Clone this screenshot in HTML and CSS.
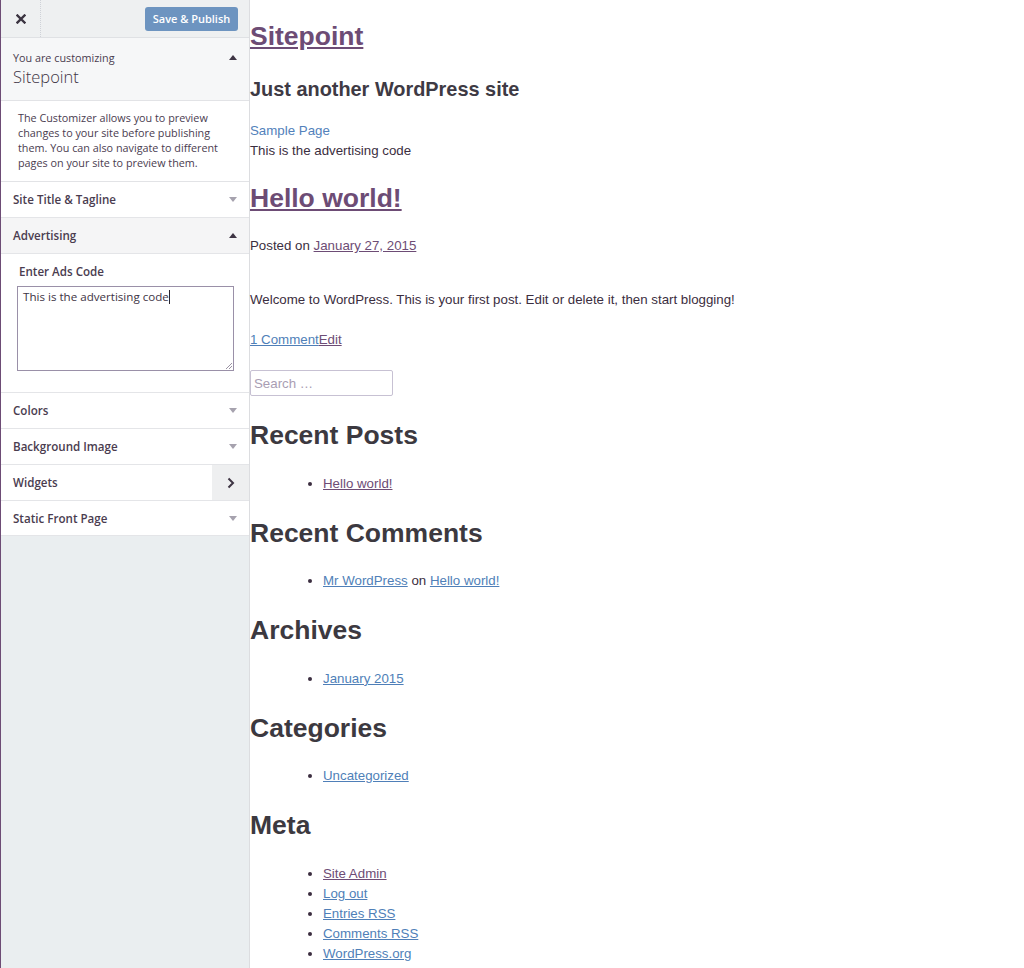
FILE: index.html
```html
<!DOCTYPE html>
<html lang="en">
<head>
<meta charset="utf-8">
<title>Customize: Sitepoint</title>
<link rel="stylesheet" href="styles.css">
</head>
<body>
<aside class="customizer">
  <header class="cz-header">
    <div class="cz-close">
      <svg width="10" height="10" viewBox="0 0 10 10"><path d="M1.5 1.5 L8.5 8.5 M8.5 1.5 L1.5 8.5" stroke="#3a3340" stroke-width="2.4" stroke-linecap="square"/></svg>
    </div>
    <button class="cz-save">Save &amp; Publish</button>
  </header>

  <section class="cz-info">
    <div class="cz-info-text">
      <span class="cz-info-small">You are customizing</span>
      <span class="cz-info-title">Sitepoint</span>
    </div>
    <svg class="arrow" width="8" height="5" viewBox="0 0 8 5"><polygon points="0,5 8,5 4,0" fill="#3e3544"/></svg>
  </section>

  <div class="cz-desc">The Customizer allows you to preview changes to your site before publishing them. You can also navigate to different pages on your site to preview them.</div>

  <div class="cz-row">
    <span>Site Title &amp; Tagline</span>
    <svg class="arrow" width="8" height="5" viewBox="0 0 8 5"><polygon points="0,0 8,0 4,5" fill="#a6a2ae"/></svg>
  </div>
  <div class="cz-row open">
    <span>Advertising</span>
    <svg class="arrow" width="8" height="5" viewBox="0 0 8 5"><polygon points="0,5 8,5 4,0" fill="#3e3544"/></svg>
  </div>
  <div class="cz-content">
    <label class="cz-label">Enter Ads Code</label>
    <div class="cz-textarea">This is the advertising code<span class="caret"></span>
      <svg class="grip" width="7" height="7" viewBox="0 0 7 7"><path d="M1 7 L7 1 M4 7 L7 4" stroke="#9b93a3" stroke-width="1"/></svg>
    </div>
  </div>
  <div class="cz-row">
    <span>Colors</span>
    <svg class="arrow" width="8" height="5" viewBox="0 0 8 5"><polygon points="0,0 8,0 4,5" fill="#a6a2ae"/></svg>
  </div>
  <div class="cz-row">
    <span>Background Image</span>
    <svg class="arrow" width="8" height="5" viewBox="0 0 8 5"><polygon points="0,0 8,0 4,5" fill="#a6a2ae"/></svg>
  </div>
  <div class="cz-row panel">
    <span>Widgets</span>
    <div class="cz-go">
      <svg width="8" height="12" viewBox="0 0 8 12"><path d="M1.5 1.5 L6 6 L1.5 10.5" fill="none" stroke="#3e3544" stroke-width="2"/></svg>
    </div>
  </div>
  <div class="cz-row last">
    <span>Static Front Page</span>
    <svg class="arrow" width="8" height="5" viewBox="0 0 8 5"><polygon points="0,0 8,0 4,5" fill="#a6a2ae"/></svg>
  </div>
</aside>

<main class="preview">
  <h1 class="site-title"><a href="#" class="visited">Sitepoint</a></h1>
  <h2 class="tagline">Just another WordPress site</h2>
  <div class="line nav"><a href="#" class="plain">Sample Page</a></div>
  <div class="line">This is the advertising code</div>

  <h1 class="entry-title"><a href="#" class="visited">Hello world!</a></h1>
  <div class="line posted">Posted on <a href="#" class="visited">January 27, 2015</a></div>
  <p class="line content">Welcome to WordPress. This is your first post. Edit or delete it, then start blogging!</p>
  <div class="line footer"><a href="#" class="blue">1 Comment</a><a href="#" class="visited">Edit</a></div>

  <div class="search"><span class="placeholder">Search …</span></div>

  <h2 class="widget-title">Recent Posts</h2>
  <ul class="widget-list">
    <li><a href="#" class="visited">Hello world!</a></li>
  </ul>
  <h2 class="widget-title">Recent Comments</h2>
  <ul class="widget-list">
    <li><a href="#" class="blue">Mr WordPress</a> on <a href="#" class="blue">Hello world!</a></li>
  </ul>
  <h2 class="widget-title">Archives</h2>
  <ul class="widget-list">
    <li><a href="#" class="blue">January 2015</a></li>
  </ul>
  <h2 class="widget-title">Categories</h2>
  <ul class="widget-list">
    <li><a href="#" class="blue">Uncategorized</a></li>
  </ul>
  <h2 class="widget-title">Meta</h2>
  <ul class="widget-list">
    <li><a href="#" class="visited">Site Admin</a></li>
    <li><a href="#" class="blue"><abbr>Log out</abbr></a></li>
    <li><a href="#" class="blue"><abbr>Entries RSS</abbr></a></li>
    <li><a href="#" class="blue"><abbr>Comments RSS</abbr></a></li>
    <li><a href="#" class="blue">WordPress.org</a></li>
  </ul>
</main>
</body>
</html>
```
FILE: styles.css
```css
html, body {
  margin: 0;
  padding: 0;
  height: 100%;
}
body {
  display: flex;
  align-items: stretch;
  background: #ffffff;
  overflow: hidden;
}

/* ---------- Customizer sidebar ---------- */
.customizer {
  width: 248px;
  flex: none;
  height: 968px;
  background: #eaeef0;
  border-left: 1px solid #6d4c75;
  border-right: 1px solid #dcdde0;
  font-family: "Open Sans", "Noto Sans", sans-serif;
  color: #4a3c4f;
  display: flex;
  flex-direction: column;
}
.cz-header {
  height: 37px;
  border-bottom: 1px solid #dfe1e4;
  display: flex;
  align-items: center;
  justify-content: space-between;
  background: #eef0f1;
}
.cz-close {
  width: 39px;
  height: 37px;
  border-right: 1px dotted #cfd2d8;
  display: flex;
  align-items: center;
  justify-content: center;
}
.cz-save {
  width: 93px;
  height: 24px;
  margin-right: 11px;
  border: none;
  border-radius: 3px;
  background: #6d94c0;
  color: #ffffff;
  font-family: "Open Sans", "Noto Sans", sans-serif;
  font-weight: 600;
  font-size: 11px;
  padding: 0;
}
.cz-info {
  height: 62px;
  background: #f6f7f8;
  border-bottom: 1px solid #e2e3e6;
  display: flex;
  justify-content: space-between;
  align-items: flex-start;
  padding: 0 12px 0 12px;
}
.cz-info-text {
  display: flex;
  flex-direction: column;
  padding-top: 12px;
}
.cz-info-small {
  font-size: 10.8px;
  line-height: 16px;
}
.cz-info-title {
  font-size: 16.5px;
  line-height: 22px;
  font-weight: 300;
  color: #3e3444;
}
.cz-info .arrow {
  margin-top: 17px;
}
.cz-desc {
  background: #ffffff;
  border-bottom: 1px solid #e2e3e6;
  padding: 9px 14px 11px 17px;
  font-size: 10.8px;
  line-height: 15px;
  height: 60px;
}
.cz-row {
  height: 35px;
  background: #ffffff;
  border-bottom: 1px solid #e4e5e8;
  display: flex;
  align-items: center;
  justify-content: space-between;
  padding: 0 12px;
  font-size: 11.6px;
  font-weight: 600;
  color: #4a3c4f;
}
.cz-row.open {
  background: #f5f5f6;
}
.cz-row.panel {
  padding-right: 0;
}
.cz-row.last {
  height: 34px;
}
.cz-go {
  width: 37px;
  height: 35px;
  background: #eeeff0;
  display: flex;
  align-items: center;
  justify-content: center;
}
.cz-content {
  background: #ffffff;
  border-bottom: 1px solid #e4e5e8;
  padding: 9px 15px 21px 16px;
}
.cz-label {
  display: block;
  font-size: 11.6px;
  font-weight: 600;
  line-height: 18px;
  margin-bottom: 5px;
  padding-left: 2px;
}
.cz-textarea {
  position: relative;
  box-sizing: border-box;
  height: 85px;
  border: 1px solid #9a90a8;
  padding: 2px 5px;
  font-size: 11.6px;
  line-height: 16px;
  color: #3e3444;
  background: #ffffff;
}
.caret {
  display: inline-block;
  width: 1px;
  height: 14px;
  background: #2a2530;
  vertical-align: -3px;
}
.grip {
  position: absolute;
  right: 1px;
  bottom: 1px;
}

/* ---------- Preview ---------- */
.preview {
  flex: 1;
  padding: 0;
  font-family: "Liberation Sans", Arial, sans-serif;
  font-size: 13.3px;
  color: #3b2e40;
}
.preview a { text-decoration: underline; }
.preview a.visited { color: #6d4c75; }
.preview a.blue { color: #4f7fb8; }
.preview a.plain { color: #5281bb; text-decoration: none; }
.preview abbr { text-decoration: none; }

.site-title {
  font-size: 26.5px;
  line-height: 30px;
  margin: 21px 0 0;
}
.tagline {
  font-size: 19.9px;
  line-height: 24px;
  margin: 26px 0 0;
  color: #3e3a44;
}
.line {
  line-height: 20px;
  margin: 0;
}
.nav { margin-top: 20px; }
.entry-title {
  font-size: 26.5px;
  line-height: 30px;
  margin: 22px 0 0;
}
.posted { margin-top: 23px; }
.content { margin-top: 34px; }
.footer { margin-top: 20px; }
.search {
  margin-top: 20px;
  box-sizing: border-box;
  width: 143px;
  height: 26px;
  border: 1px solid #c7c1d3;
  border-radius: 2px;
  display: flex;
  align-items: center;
  padding-left: 3px;
}
.placeholder {
  color: #a99db3;
  font-size: 13.3px;
}
.widget-title {
  font-size: 26.5px;
  line-height: 30px;
  margin: 24px 0 0;
  color: #3c3940;
}
.widget-title + .widget-list { margin-top: 23.5px; }
.widget-list {
  margin: 0;
  padding-left: 73px;
  line-height: 20px;
}
.widget-list + .widget-title { margin-top: 24px; }
```
